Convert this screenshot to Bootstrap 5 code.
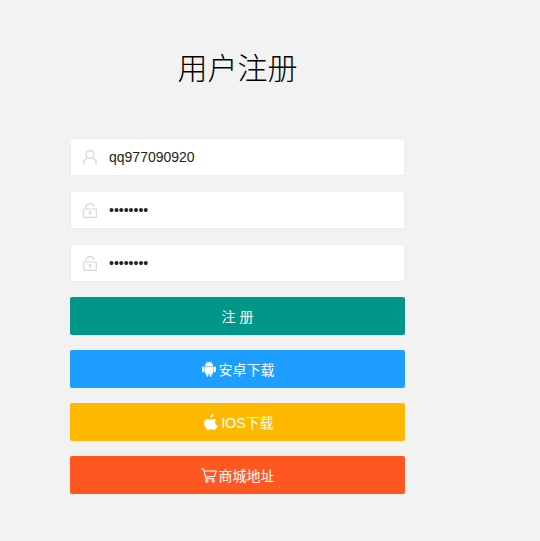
<!DOCTYPE html>
<html lang="zh-CN">
<head>
<meta charset="utf-8">
<title>用户注册</title>
<link href="https://cdn.jsdelivr.net/npm/bootstrap@5.3.0/dist/css/bootstrap.min.css" rel="stylesheet">
<style>
html, body { height: 100%; }
body { background: #f2f2f2; font-family: "Liberation Sans", "Noto Sans CJK SC", sans-serif; color: #000; overflow: hidden; }
.reg-wrap { width: 335px; margin-left: 70px; }
.reg-title { font-size: 30px; font-weight: 300; line-height: 42px; margin: 48px 0 48px; text-align: center; color: #000; }
.reg-field { height: 38px; background: #fff; border: 1px solid #eeeeee; border-radius: 2px; margin-bottom: 15px; }
.reg-icon { width: 38px; flex: none; display: flex; justify-content: center; align-items: center; padding-right: 1px; }
.reg-input { border: 0; outline: 0; background: transparent; flex: 1; min-width: 0; height: 36px; padding: 0; font-size: 14px; color: #222; font-family: inherit; }
.reg-btn { height: 38px; width: 100%; border: 0; border-radius: 2px; color: #fff; font-size: 14px; line-height: 20px; padding: 2px 0 0; margin-bottom: 15px; gap: 3px; }
.reg-link { padding-left: 1px; }
.reg-ios { padding-left: 3px; }
.reg-shop { gap: 2px; padding-left: 0; }
.reg-btn svg { flex: none; margin-top: -2px; }
.b-green, .b-green:hover { background: #009688; color: #fff; }
.b-blue, .b-blue:hover { background: #1e9fff; color: #fff; }
.b-yellow, .b-yellow:hover { background: #ffb800; color: #fff; }
.b-orange, .b-orange:hover { background: #ff5722; color: #fff; }
</style>
</head>
<body>
<div class="reg-wrap">
  <h1 class="reg-title">用户注册</h1>
  <form>
    <div class="reg-field d-flex align-items-center">
      <span class="reg-icon">
        <svg width="14" height="15" viewBox="0 0 14 15" fill="none" stroke="#d8d8d8" stroke-width="1.4"><circle cx="7" cy="4.600" r="3.900"/><path d="M.8 14.500v-1.300c0-2.500 1.800-4.400 3.500-5M13.200 14.500v-1.300c0-2.500-1.800-4.400-3.500-5"/></svg>
      </span>
      <input class="reg-input" type="text" value="qq977090920">
    </div>
    <div class="reg-field d-flex align-items-center">
      <span class="reg-icon">
        <svg width="14" height="15" viewBox="0 0 14 15" fill="none" stroke="#d8d8d8" stroke-width="1.200"><path d="M3 6V3.800C3 1.900 4.800.7 7 .7s3.900 1.100 4 3.100"/><rect x=".7" y="6" width="12.600" height="8.300" rx=".6"/><path d="M7 8.400v3.600M5.700 9.700 7 8.400l1.300 1.300"/></svg>
      </span>
      <input class="reg-input" type="password" value="12345678">
    </div>
    <div class="reg-field d-flex align-items-center">
      <span class="reg-icon">
        <svg width="14" height="15" viewBox="0 0 14 15" fill="none" stroke="#d8d8d8" stroke-width="1.200"><path d="M3 6V3.800C3 1.900 4.800.7 7 .7s3.900 1.100 4 3.100"/><rect x=".7" y="6" width="12.600" height="8.300" rx=".6"/><path d="M7 8.400v3.600M5.700 9.700 7 8.400l1.300 1.300"/></svg>
      </span>
      <input class="reg-input" type="password" value="12345678">
    </div>
    <button type="button" class="btn reg-btn b-green d-flex justify-content-center align-items-center">注 册</button>
    <a href="#" class="btn reg-btn reg-link b-blue d-flex justify-content-center align-items-center">
      <svg width="14" height="16" viewBox="0 0 14 16" fill="#fff"><path d="M2.900 5C3 3.500 3.800 2.300 5 1.700L4.300.5l.4-.2L5.500 1.500C6.400 1.100 7.600 1.100 8.500 1.500L9.300.3l.4.2L9 1.700c1.200.6 2 1.800 2.100 3.300z"/><path d="M2.900 5.600h8.200v6.400c0 .6-.4 1-1 1h-.5v1.800a1 1 0 0 1-2 0V13H6.400v1.800a1 1 0 0 1-2 0V13h-.5c-.6 0-1-.4-1-1z"/><rect x=".1" y="5.600" width="2.500" height="5.600" rx="1.250"/><rect x="11.400" y="5.600" width="2.500" height="5.600" rx="1.250"/></svg>
      <span>安卓下载</span>
    </a>
    <a href="#" class="btn reg-btn reg-ios b-yellow d-flex justify-content-center align-items-center">
      <svg width="14" height="16" viewBox="0.900 0.200 11.600 15" preserveAspectRatio="none" fill="#fff"><path d="M11.500 8.400c0-1.500 1.200-2.300 1.300-2.300-.7-1.100-1.900-1.200-2.300-1.200-1-.1-1.900.6-2.400.6s-1.300-.6-2.100-.6C4.900 4.900 3.900 5.500 3.300 6.500c-1.200 2.100-.3 5.200.9 6.900.6.800 1.300 1.800 2.200 1.700.9 0 1.200-.6 2.300-.6s1.400.6 2.300.5c1 0 1.500-.8 2.100-1.700.7-1 .9-1.900 1-2-.1 0-1.900-.7-2.100-2.400z" transform="translate(-1.700 0)"/><path d="M8.600 3.500c.5-.6.800-1.400.7-2.200-.7 0-1.500.5-2 1.100-.4.500-.8 1.300-.7 2.100.8 0 1.500-.4 2-1z" transform="translate(-.5 -1.100)"/></svg>
      <span>IOS下载</span>
    </a>
    <a href="#" class="btn reg-btn reg-shop b-orange d-flex justify-content-center align-items-center">
      <svg width="16" height="15" viewBox="0 0 16 15" fill="none" stroke="#fff" stroke-width="1.100"><path d="M.3.800h2.100l2.600 10h8.100"/><path d="M3 3h12.200l-1.700 5.400-9.300.6"/><circle cx="5.800" cy="13" r="1.200"/><circle cx="12.200" cy="13" r="1.200"/></svg>
      <span>商城地址</span>
    </a>
  </form>
</div>
<script src="https://cdn.jsdelivr.net/npm/bootstrap@5.3.0/dist/js/bootstrap.bundle.min.js"></script>
</body>
</html>
